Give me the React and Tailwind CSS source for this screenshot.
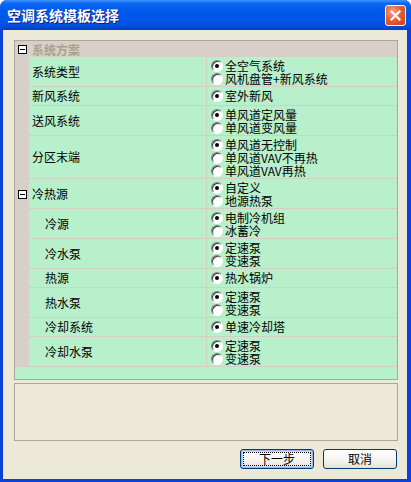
import React from "react";

const rows = [
  { label: "系统类型", indent: 1, opts: ["全空气系统", "风机盘管+新风系统"] },
  { label: "新风系统", indent: 1, opts: ["室外新风"] },
  { label: "送风系统", indent: 1, opts: ["单风道定风量", "单风道变风量"] },
  { label: "分区末端", indent: 1, opts: ["单风道无控制", "单风道VAV不再热", "单风道VAV再热"] },
  { label: "冷热源", indent: 1, toggle: true, opts: ["自定义", "地源热泵"] },
  { label: "冷源", indent: 2, opts: ["电制冷机组", "冰蓄冷"] },
  { label: "冷水泵", indent: 2, opts: ["定速泵", "变速泵"] },
  { label: "热源", indent: 2, opts: ["热水锅炉"] },
  { label: "热水泵", indent: 2, opts: ["定速泵", "变速泵"] },
  { label: "冷却系统", indent: 2, opts: ["单速冷却塔"] },
  { label: "冷却水泵", indent: 2, opts: ["定速泵", "变速泵"] },
];

function Minus() {
  return (
    <span className="w-[9px] h-[9px] border border-black bg-white flex items-center justify-center">
      <span className="w-[5px] h-[1px] bg-black" />
    </span>
  );
}

function Radio({ checked }) {
  return (
    <span className="w-[12px] h-[12px] rounded-full border border-t-[#808080] border-l-[#808080] border-r-white border-b-white bg-white shadow-[inset_1px_1px_0_#404040] flex items-center justify-center shrink-0">
      {checked && <span className="w-[4px] h-[4px] rounded-full bg-black" />}
    </span>
  );
}

function Row({ row }) {
  return (
    <div className="flex">
      <div className="w-[14px] bg-[#D8D0C8] flex items-center justify-center">
        {row.toggle && <Minus />}
      </div>
      <div className="flex-1 flex border-b border-[#D4CFC6]">
        <div
          className={
            "w-[178px] border-r border-[#D4CFC6] flex items-center " +
            (row.indent === 2 ? "pl-[16px]" : "pl-[3px]")
          }
        >
          {row.label}
        </div>
        <div className="flex-1 flex flex-col pt-[2px] pb-[1px] pl-[4px]">
          {row.opts.map((o, i) => (
            <div key={o + i} className="h-[13px] flex items-center gap-[2px]">
              <Radio checked={i === 0} />
              <span className="leading-[13px]">{o}</span>
            </div>
          ))}
        </div>
      </div>
    </div>
  );
}

function XPButton({ children, isDefault }) {
  return (
    <button
      className={
        "w-[74px] h-[20px] rounded-[3px] border border-[#003C74] bg-[linear-gradient(to_bottom,#FFFFFF_0%,#F4F3EE_60%,#E3E1D6_100%)] flex items-center justify-center p-[1px] " +
        (isDefault ? "shadow-[inset_0_0_0_1px_#9CB8EC,inset_0_0_0_2px_#C7DAF8]" : "")
      }
    >
      <span
        className={
          "w-full h-full flex items-center justify-center text-[12px] leading-[12px] " +
          (isDefault ? "outline-1 outline-dotted outline-black -outline-offset-2" : "")
        }
      >
        {children}
      </span>
    </button>
  );
}

export default function App() {
  return (
    <div
      className="w-[411px] h-[482px] flex flex-col rounded-t-[7px] overflow-hidden bg-[#0842D9] text-[12px] text-black"
      style={{ fontFamily: '"Noto Sans CJK SC", "Noto Sans", sans-serif' }}
    >
      {/* title bar */}
      <div className="h-[30px] shrink-0 flex items-center justify-between pl-[7px] pr-[5px] bg-[linear-gradient(to_bottom,#3E93FF_0%,#0A66F0_12%,#0058EC_40%,#0055E8_75%,#0049D8_92%,#003FC5_100%)]">
        <span className="text-white font-bold text-[14px] leading-[14px] [text-shadow:1px_1px_0_#0A1E80]">
          空调系统模板选择
        </span>
        <div className="w-[21px] h-[21px] rounded-[3px] border border-white bg-[radial-gradient(circle_at_35%_30%,#F2A58A_0%,#E4622F_45%,#C8401A_100%)] flex items-center justify-center">
          <svg width="11" height="11" viewBox="0 0 11 11">
            <path d="M1.5 1.5 L9.5 9.5 M9.5 1.5 L1.5 9.5" stroke="white" strokeWidth="2.2" strokeLinecap="square" />
          </svg>
        </div>
      </div>

      {/* client */}
      <div className="flex-1 flex flex-col bg-[#ECE9D8] ml-[3px] mr-[4px] mb-[3px] pt-[10px] pl-[11px] pr-[9px]">
        <div className="h-[340px] border border-[#ACA899] bg-[#B8F0CC] flex flex-col">
          <div className="h-[16px] bg-[#D8D0C8] flex items-center">
            <div className="w-[14px] flex items-center justify-center">
              <Minus />
            </div>
            <span className="pl-[3px] font-bold text-[#A9A18E] leading-[13px]">系统方案</span>
          </div>
          {rows.map((r) => (
            <Row key={r.label} row={r} />
          ))}
        </div>

        <div className="mt-[3px] h-[58px] border border-[#ACA899] bg-[#ECE9D8]" />

        <div className="mt-[8px] flex justify-end gap-[9px] pr-[1px]">
          <XPButton isDefault>下一步</XPButton>
          <XPButton>取消</XPButton>
        </div>
      </div>
    </div>
  );
}
